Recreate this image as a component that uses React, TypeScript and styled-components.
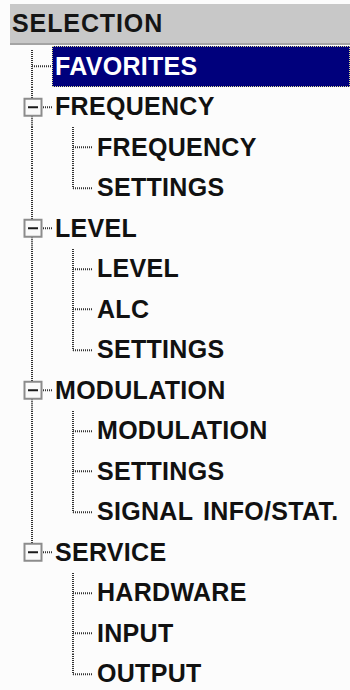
import React from "react";
import styled, { createGlobalStyle } from "styled-components";

const Global = createGlobalStyle`
  html, body {
    margin: 0;
    padding: 0;
    background: #fcfcfc;
  }
  body {
    font-family: "Liberation Sans", Arial, sans-serif;
    color: #111;
  }
`;

const Panel = styled.div`
  width: 350px;
  height: 690px;
  padding-top: 4px;
  box-sizing: border-box;
  background: #fcfcfc;
  overflow: hidden;
`;

const Header = styled.div`
  margin-left: 10px;
  height: 39px;
  background: #c8c8c8;
  border-bottom: 2px solid #a4a4a4;
  display: flex;
  align-items: center;
  padding-left: 2px;
  font-weight: bold;
  font-size: 25px;
  letter-spacing: 0.9px;
  color: #141414;
`;

const Tree = styled.div`
  display: flex;
  flex-direction: column;
  padding-top: 1px;
`;

const Row = styled.div<{ $h: number }>`
  display: flex;
  align-items: stretch;
  height: ${(p) => p.$h}px;
`;

const Label = styled.div<{ $selected?: boolean }>`
  flex: 1;
  display: flex;
  align-items: center;
  padding-left: 3px;
  font-weight: bold;
  font-size: 25px;
  letter-spacing: 0.3px;
  word-spacing: 3px;
  white-space: nowrap;
  color: ${(p) => (p.$selected ? "#ffffff" : "#111111")};
  background: ${(p) => (p.$selected ? "#00007c" : "transparent")};
  outline: ${(p) => (p.$selected ? "1px dotted #d8d890" : "none")};
  outline-offset: -1px;
`;

const Line = styled.line`
  stroke: #333333;
  stroke-width: 2;
  stroke-dasharray: 1 1;
`;

type TopProps = { h: number; first?: boolean; last?: boolean; expandable?: boolean };

const TopConnector: React.FC<TopProps> = ({ h, first, last, expandable }) => {
  const c = h / 2;
  return (
    <svg width={52} height={h} style={{ flex: "none" }}>
      {expandable ? (
        <>
          {!first && <Line x1={32} y1={0} x2={32} y2={c - 9} />}
          {!last && <Line x1={32} y1={c + 9} x2={32} y2={h} />}
          <rect x={24.5} y={c - 8.5} width={17} height={17} fill="#fafafa" stroke="#8c8c8c" strokeWidth={2} />
          <line x1={28} y1={c} x2={38} y2={c} stroke="#1a1a1a" strokeWidth={2} />
          <Line x1={43} y1={c} x2={52} y2={c} />
        </>
      ) : (
        <>
          <Line x1={32} y1={first ? 4 : 0} x2={32} y2={last ? c : h} />
          <Line x1={32} y1={c} x2={52} y2={c} />
        </>
      )}
    </svg>
  );
};

type ChildProps = { h: number; parentLast?: boolean; last?: boolean };

const ChildConnector: React.FC<ChildProps> = ({ h, parentLast, last }) => {
  const c = h / 2;
  return (
    <svg width={94} height={h} style={{ flex: "none" }}>
      {!parentLast && <Line x1={32} y1={0} x2={32} y2={h} />}
      <Line x1={73} y1={0} x2={73} y2={last ? c : h} />
      <Line x1={73} y1={c} x2={93} y2={c} />
    </svg>
  );
};

type Node = { label: string; selected?: boolean; children?: string[] };

const data: Node[] = [
  { label: "FAVORITES", selected: true },
  { label: "FREQUENCY", children: ["FREQUENCY", "SETTINGS"] },
  { label: "LEVEL", children: ["LEVEL", "ALC", "SETTINGS"] },
  { label: "MODULATION", children: ["MODULATION", "SETTINGS", "SIGNAL INFO/STAT."] },
  { label: "SERVICE", children: ["HARDWARE", "INPUT", "OUTPUT"] },
];

const ROW = 40.5;

export default function App() {
  return (
    <>
      <Global />
      <Panel>
        <Header>SELECTION</Header>
        <Tree>
          {data.map((n, i) => {
            const lastTop = i === data.length - 1;
            return (
              <React.Fragment key={n.label + i}>
                <Row $h={ROW}>
                  <TopConnector h={ROW} first={i === 0} last={lastTop} expandable={!!n.children} />
                  <Label $selected={n.selected}>{n.label}</Label>
                </Row>
                {n.children?.map((c, j) => (
                  <Row $h={ROW} key={c + j}>
                    <ChildConnector h={ROW} parentLast={lastTop} last={j === n.children!.length - 1} />
                    <Label>{c}</Label>
                  </Row>
                ))}
              </React.Fragment>
            );
          })}
        </Tree>
      </Panel>
    </>
  );
}
